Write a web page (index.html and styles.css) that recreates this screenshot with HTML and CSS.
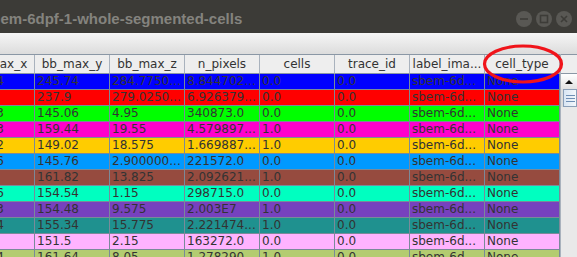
FILE: index.html
```html
<!DOCTYPE html>
<html lang="en">
<head>
  <meta charset="UTF-8" />
  <title>sbem-6dpf-1-whole-segmented-cells</title>
  <link rel="stylesheet" href="styles.css">
</head>
<body>
  <div class="window">
    <div class="titlebar">
      <span class="title">sbem-6dpf-1-whole-segmented-cells</span>
      <div class="controls">
        <span class="ctl"><svg width="16" height="16" viewBox="0 0 16 16"><line x1="4" y1="8" x2="12" y2="8" /></svg></span>
        <span class="ctl"><svg width="16" height="16" viewBox="0 0 16 16"><rect x="4.5" y="4.5" width="7" height="7" /></svg></span>
        <span class="ctl"><svg width="16" height="16" viewBox="0 0 16 16"><line x1="5" y1="5" x2="11" y2="11" /><line x1="11" y1="5" x2="5" y2="11" /></svg></span>
      </div>
    </div>
    <div class="menubar"></div>

    <div class="table-area">
      <div class="grid">
        <div class="row head">
          <div class="cell">bb_max_x</div>
          <div class="cell">bb_max_y</div>
          <div class="cell">bb_max_z</div>
          <div class="cell">n_pixels</div>
          <div class="cell">cells</div>
          <div class="cell">trace_id</div>
          <div class="cell">label_ima...</div>
          <div class="cell">cell_type</div>
        </div>
        <div class="row c-blue">
          <div class="cell">240.14</div><div class="cell">245.74</div><div class="cell">284.7750...</div><div class="cell">8.844702...</div>
          <div class="cell">0.0</div><div class="cell">0.0</div><div class="cell">sbem-6d...</div><div class="cell">None</div>
        </div>
        <div class="row c-red">
          <div class="cell">231.5</div><div class="cell">237.9</div><div class="cell">279.0250...</div><div class="cell">6.926379...</div>
          <div class="cell">0.0</div><div class="cell">0.0</div><div class="cell">sbem-6d...</div><div class="cell">None</div>
        </div>
        <div class="row c-green">
          <div class="cell">139.83</div><div class="cell">145.06</div><div class="cell">4.95</div><div class="cell">340873.0</div>
          <div class="cell">0.0</div><div class="cell">0.0</div><div class="cell">sbem-6d...</div><div class="cell">None</div>
        </div>
        <div class="row c-magenta">
          <div class="cell">153.63</div><div class="cell">159.44</div><div class="cell">19.55</div><div class="cell">4.579897...</div>
          <div class="cell">1.0</div><div class="cell">0.0</div><div class="cell">sbem-6d...</div><div class="cell">None</div>
        </div>
        <div class="row c-yellow">
          <div class="cell">143.52</div><div class="cell">149.02</div><div class="cell">18.575</div><div class="cell">1.669887...</div>
          <div class="cell">1.0</div><div class="cell">0.0</div><div class="cell">sbem-6d...</div><div class="cell">None</div>
        </div>
        <div class="row c-sky">
          <div class="cell">140.16</div><div class="cell">145.76</div><div class="cell">2.900000...</div><div class="cell">221572.0</div>
          <div class="cell">0.0</div><div class="cell">0.0</div><div class="cell">sbem-6d...</div><div class="cell">None</div>
        </div>
        <div class="row c-brown">
          <div class="cell">156.2</div><div class="cell">161.82</div><div class="cell">13.825</div><div class="cell">2.092621...</div>
          <div class="cell">1.0</div><div class="cell">0.0</div><div class="cell">sbem-6d...</div><div class="cell">None</div>
        </div>
        <div class="row c-aqua">
          <div class="cell">148.86</div><div class="cell">154.54</div><div class="cell">1.15</div><div class="cell">298715.0</div>
          <div class="cell">0.0</div><div class="cell">0.0</div><div class="cell">sbem-6d...</div><div class="cell">None</div>
        </div>
        <div class="row c-purple">
          <div class="cell">148.73</div><div class="cell">154.48</div><div class="cell">9.575</div><div class="cell">2.003E7</div>
          <div class="cell">1.0</div><div class="cell">0.0</div><div class="cell">sbem-6d...</div><div class="cell">None</div>
        </div>
        <div class="row c-teal">
          <div class="cell">149.54</div><div class="cell">155.34</div><div class="cell">15.775</div><div class="cell">2.221474...</div>
          <div class="cell">1.0</div><div class="cell">0.0</div><div class="cell">sbem-6d...</div><div class="cell">None</div>
        </div>
        <div class="row c-pink">
          <div class="cell">145.9</div><div class="cell">151.5</div><div class="cell">2.15</div><div class="cell">163272.0</div>
          <div class="cell">0.0</div><div class="cell">0.0</div><div class="cell">sbem-6d...</div><div class="cell">None</div>
        </div>
        <div class="row c-olive">
          <div class="cell">155.84</div><div class="cell">161.64</div><div class="cell">8.05</div><div class="cell">1.278290...</div>
          <div class="cell">1.0</div><div class="cell">0.0</div><div class="cell">sbem-6d...</div><div class="cell">None</div>
        </div>
      </div>

      <div class="scrollbar">
        <div class="sb-corner"></div>
        <div class="sb-up"><svg width="16" height="15" viewBox="0 0 16 15"><polygon points="4,10 12,10 8,6" /></svg></div>
        <div class="sb-track">
          <div class="sb-thumb"><span></span><span></span><span></span></div>
        </div>
      </div>
    </div>

    <svg class="annot" width="82" height="42" viewBox="0 0 82 42">
      <ellipse cx="41" cy="21" rx="38.5" ry="18" />
    </svg>
  </div>
</body>
</html>
```

FILE: styles.css
```css
body {
  margin: 0;
  padding: 0;
  background: #eeeeee;
  overflow: hidden;
}
.window {
  position: relative;
  width: 577px;
  height: 257px;
  overflow: hidden;
  font-family: "DejaVu Sans", sans-serif;
  font-size: 12px;
  color: #333;
}
.titlebar {
  height: 33px;
  background: #3c3b37;
  display: flex;
  align-items: center;
  justify-content: space-between;
  overflow: hidden;
}
.title {
  margin-left: -17px;
  margin-top: 4px;
  font-family: "Liberation Sans", sans-serif;
  font-weight: bold;
  font-size: 15px;
  color: #84837e;
  white-space: nowrap;
}
.controls {
  display: flex;
  gap: 4px;
  margin-right: 5px;
  margin-top: 4px;
}
.ctl {
  width: 16px;
  height: 16px;
  border-radius: 50%;
  background: #595854;
  display: flex;
}
.ctl svg {
  stroke: #3d3c38;
  stroke-width: 1.6;
  fill: none;
}
.menubar {
  height: 21px;
  background: linear-gradient(#f6f6f6, #dcdcdc);
}
.table-area {
  display: flex;
  align-items: flex-start;
}
.grid {
  margin-left: -40px;
  width: 600px;
  flex: none;
}
.row {
  display: flex;
  height: 16px;
}
.cell {
  width: 75px;
  flex: none;
  box-sizing: border-box;
  border-right: 1px solid #7a8a99;
  border-bottom: 1px solid #7a8a99;
  padding-left: 2px;
  line-height: 15px;
  white-space: nowrap;
  overflow: hidden;
}
.row.head {
  height: 20px;
  background: #eeeeee;
  border-top: 1px solid #8a97a5;
  box-sizing: border-box;
}
.head .cell {
  text-align: center;
  line-height: 18px;
  padding-left: 0;
  border-right-color: #a9b2bd;
  border-bottom-color: #8a97a5;
}
.c-blue { background: #0000ff; }
.c-red { background: #ff0000; }
.c-green { background: #00ff00; }
.c-magenta { background: #ff00cc; }
.c-yellow { background: #ffcc00; }
.c-sky { background: #0099ff; }
.c-brown { background: #964b3f; }
.c-aqua { background: #00ffc0; }
.c-purple { background: #7741be; }
.c-teal { background: #1f918f; }
.c-pink { background: #ffb3ff; }
.c-olive { background: #b3cc70; }

.scrollbar {
  width: 17px;
  height: 203px;
  flex: none;
  background: #e9e9e9;
  border-left: 1px solid #a9b2bd;
  box-sizing: border-box;
}
.sb-corner {
  height: 20px;
  box-sizing: border-box;
  border-top: 1px solid #8a97a5;
  border-bottom: 1px solid #8a97a5;
  background: #eeeeee;
}
.sb-up {
  height: 15px;
  background: linear-gradient(#ffffff, #e2e2e2);
  display: flex;
}
.sb-up svg {
  fill: #111;
}
.sb-track {
  border-left: 2px solid #dcdcdc;
}
.sb-thumb {
  height: 18px;
  box-sizing: border-box;
  border: 1px solid #8a9fb8;
  background: linear-gradient(90deg, #d8e5f3, #f4f8fc);
  display: flex;
  flex-direction: column;
  align-items: center;
  justify-content: center;
  gap: 2px;
}
.sb-thumb span {
  display: block;
  width: 9px;
  height: 1px;
  background: #6f8fb5;
}
.annot {
  position: absolute;
  left: 482px;
  top: 43px;
  fill: none;
  stroke: #f0141a;
  stroke-width: 3.2;
}
```
